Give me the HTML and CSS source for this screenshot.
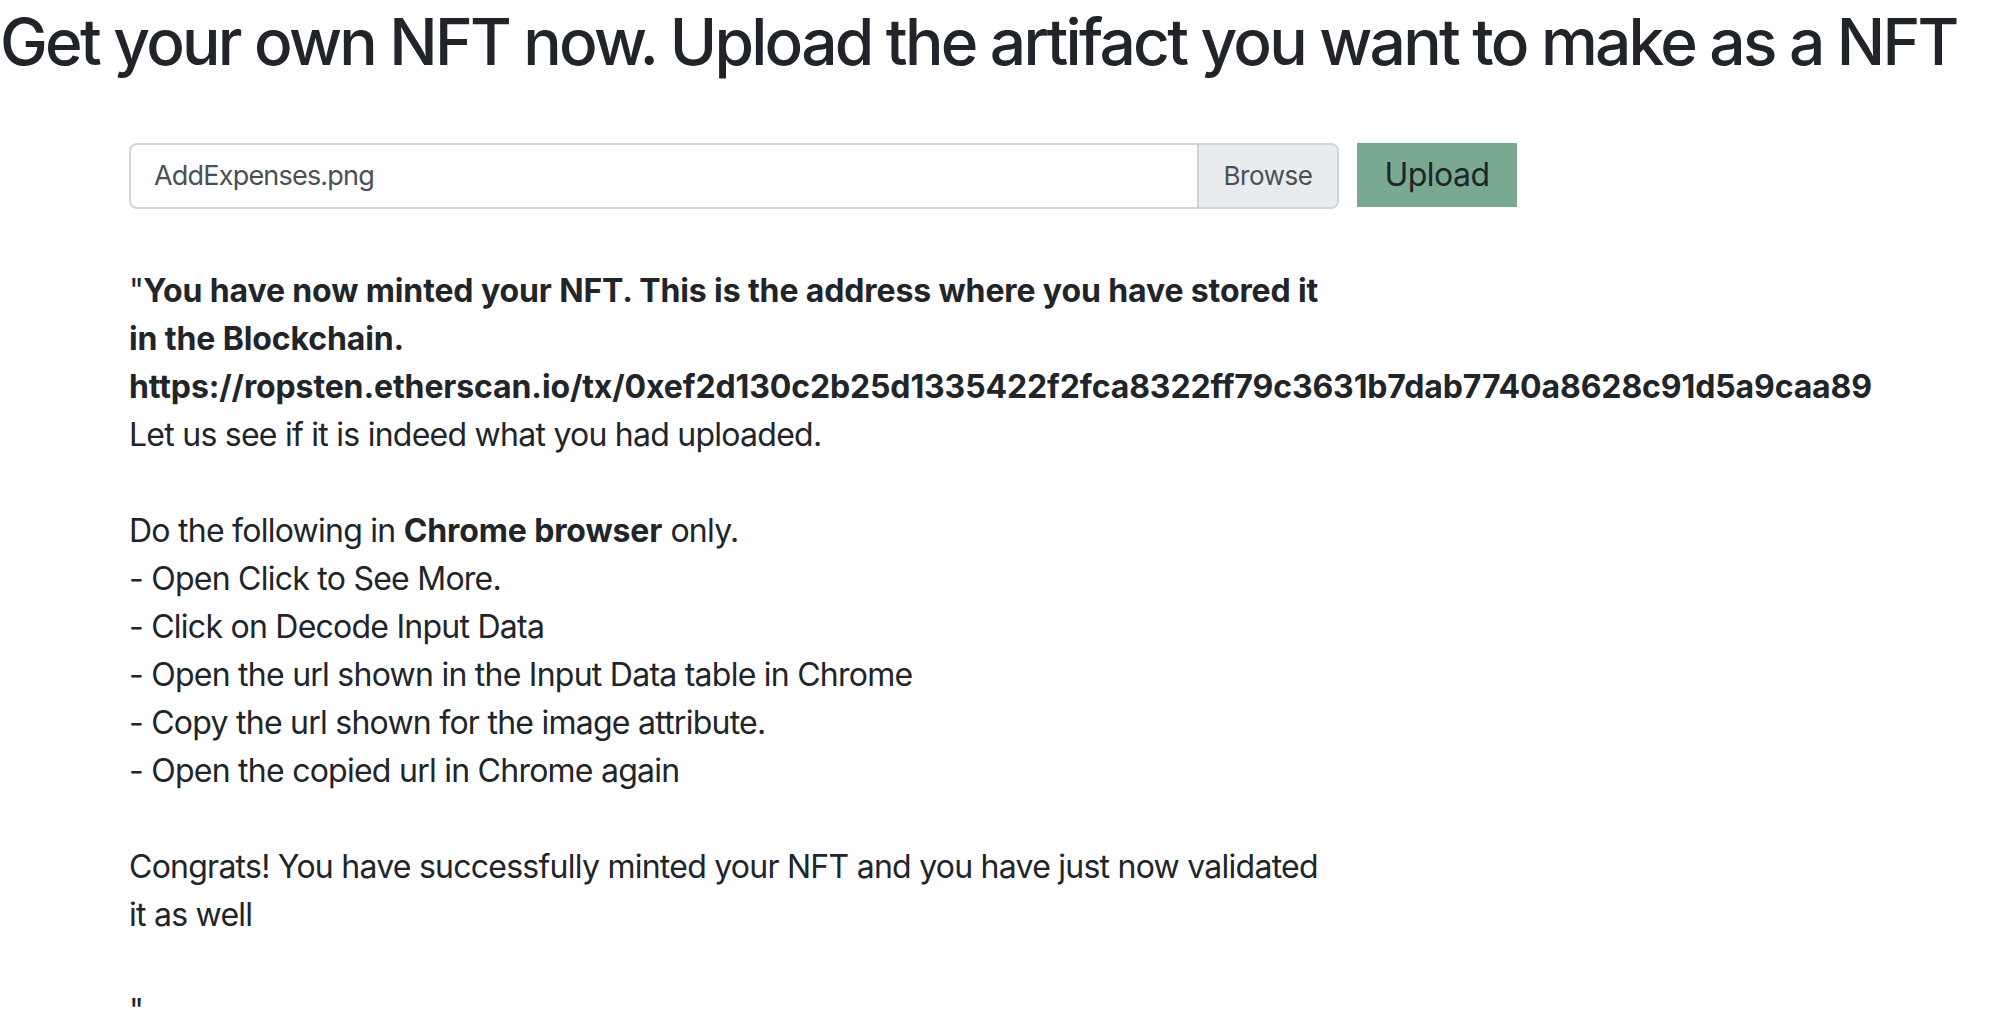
FILE: index.html
```html
<!DOCTYPE html>
<html lang="en">
<head>
<meta charset="utf-8">
<title>Mint NFT</title>
<link rel="stylesheet" href="styles.css">
</head>
<body>
<h2 class="title">Get your own NFT now. Upload the artifact you want to make as a NFT</h2>
<div class="content">
  <form class="upload-row">
    <div class="file-input">
      <span class="file-name">AddExpenses.png</span>
      <span class="browse">Browse</span>
    </div>
    <button type="button" class="upload-btn">Upload</button>
  </form>
  <div class="message">
    <div class="line">"<b>You have now minted your NFT. This is the address where you have stored it</b></div>
    <div class="line"><b>in the Blockchain.</b></div>
    <div class="line"><b>https://ropsten.etherscan.io/tx/0xef2d130c2b25d1335422f2fca8322ff79c3631b7dab7740a8628c91d5a9caa89</b></div>
    <div class="line">Let us see if it is indeed what you had uploaded.</div>
    <div class="line blank"></div>
    <div class="line">Do the following in <b>Chrome browser</b> only.</div>
    <div class="line">- Open Click to See More.</div>
    <div class="line">- Click on Decode Input Data</div>
    <div class="line">- Open the url shown in the Input Data table in Chrome</div>
    <div class="line">- Copy the url shown for the image attribute.</div>
    <div class="line">- Open the copied url in Chrome again</div>
    <div class="line blank"></div>
    <div class="line">Congrats! You have successfully minted your NFT and you have just now validated</div>
    <div class="line">it as well</div>
    <div class="line blank"></div>
    <div class="line">"</div>
  </div>
</div>
</body>
</html>
```

FILE: styles.css
```css
* { box-sizing: border-box; }
html, body {
  margin: 0;
  padding: 0;
  background: #fff;
  color: #212529;
  font-family: Inter, "Noto Sans", "Liberation Sans", sans-serif;
}
.title {
  margin: 0;
  padding-top: 4px;
  font-size: 64px;
  font-weight: 500;
  line-height: 1.2;
  white-space: nowrap;
  letter-spacing: -2.75px;
}
.content {
  padding-left: 129px;
}
.upload-row {
  display: flex;
  align-items: flex-start;
  gap: 18px;
  margin: 62px 0 0 0;
}
.file-input {
  width: 1210px;
  height: 66px;
  display: flex;
  border: 2px solid #ced4da;
  border-radius: 8px;
  overflow: hidden;
  background: #fff;
}
.file-name {
  flex: 1;
  display: flex;
  align-items: center;
  padding-left: 23px;
  font-size: 27px;
  letter-spacing: -0.8px;
  color: #495057;
}
.browse {
  width: 140px;
  display: flex;
  align-items: center;
  justify-content: center;
  background: #e9ecef;
  border-left: 2px solid #ced4da;
  font-size: 26px;
  letter-spacing: -0.4px;
  color: #495057;
}
.upload-btn {
  width: 160px;
  height: 64px;
  border: none;
  border-radius: 0;
  background: #79aa8f;
  color: #212529;
  font-family: inherit;
  font-size: 32px;
  letter-spacing: -0.5px;
  padding: 0;
}
.message {
  margin-top: 58px;
  font-size: 32px;
  line-height: 48px;
  white-space: nowrap;
  letter-spacing: -0.75px;
}
.line { height: 48px; }
.message b {
  font-weight: 700;
  letter-spacing: -0.12px;
}
```
